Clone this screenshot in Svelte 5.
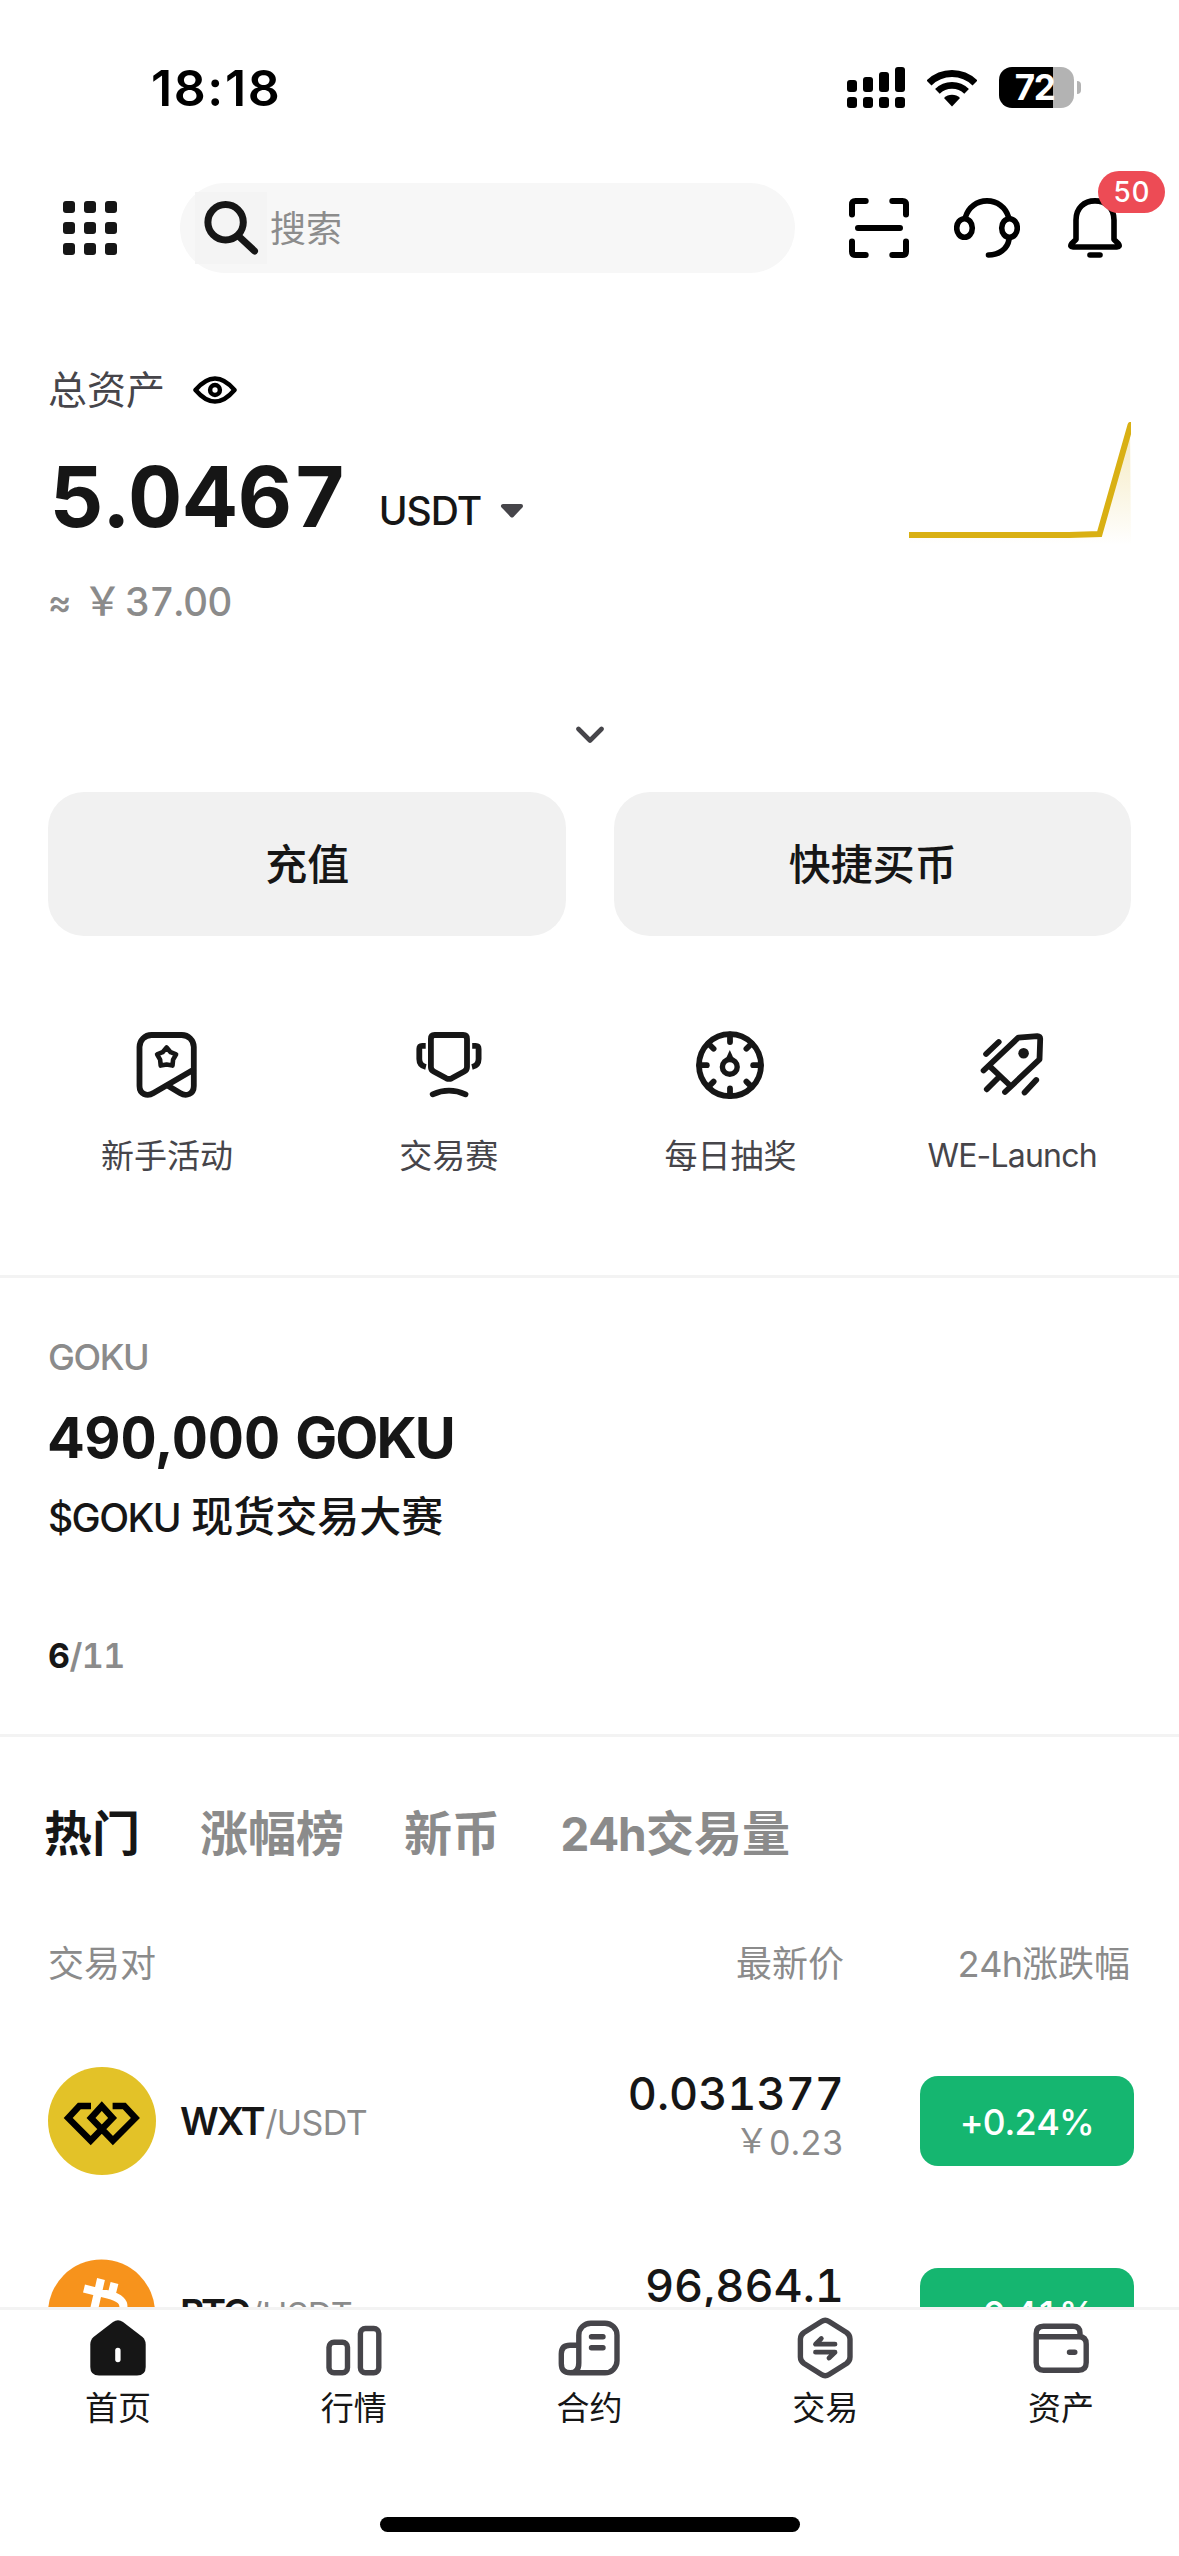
<script lang="ts">
  type Pair = { base: string; quote: string; price: string; fiat: string; change: string; logo: string };

  const signal = [12, 15, 20, 25];
  const ticks = [0, 45, 90, 135, 180, 225, 270, 315];

  const shortcuts = [
    { id: 'newbie', label: '新手活动' },
    { id: 'contest', label: '交易赛' },
    { id: 'lottery', label: '每日抽奖' },
    { id: 'launch', label: 'WE-Launch' }
  ];

  const tabs = [
    { latin: '', label: '热门' },
    { latin: '', label: '涨幅榜' },
    { latin: '', label: '新币' },
    { latin: '24h', label: '交易量' }
  ];

  const pairs: Pair[] = [
    { base: 'WXT', quote: 'USDT', price: '0.031377', fiat: '0.23', change: '+0.24%', logo: 'wxt' },
    { base: 'BTC', quote: 'USDT', price: '96,864.1', fiat: '710,014.00', change: '+0.41%', logo: 'btc' }
  ];

  const navItems = [
    { id: 'home', label: '首页' },
    { id: 'market', label: '行情' },
    { id: 'futures', label: '合约' },
    { id: 'trade', label: '交易' },
    { id: 'assets', label: '资产' }
  ];

  let activeTab = $state(0);
</script>

<div class="screen">
  <header class="status">
    <span class="time">18:18</span>
    <div class="indicators">
      <div class="signal">
        {#each signal as h}
          <div class="signal-col">
            <i style="height: {h}px"></i>
            <i class="dot"></i>
          </div>
        {/each}
      </div>
      <svg class="wifi" width="50" height="38" viewBox="0 0 50 38" fill="none" stroke="#000">
        <path d="M2 14A32.5 32.5 0 0 1 48 14" stroke-width="7" />
        <path d="M10.4 22.4A20.7 20.7 0 0 1 39.6 22.4" stroke-width="6.6" />
        <path d="M25 37.5L17 29A11.3 11.3 0 0 1 33 29Z" fill="#000" stroke="none" />
      </svg>
      <div class="battery"><span>72</span></div>
      <div class="battery-tip"></div>
    </div>
  </header>

  <div class="toolbar">
    <div class="apps">
      {#each Array(9) as _}
        <i></i>
      {/each}
    </div>
    <div class="search">
      <div class="search-icon">
        <svg width="72" height="72" viewBox="0 0 72 72" fill="none" stroke="#161616" stroke-width="7" stroke-linecap="round">
          <circle cx="30.6" cy="30.3" r="17.7" />
          <path d="M44 44.5L59.5 59" />
        </svg>
      </div>
      <span>搜索</span>
    </div>
    <div class="tools">
      <svg width="60" height="60" viewBox="0 0 60 60" fill="none" stroke="#000" stroke-width="6" stroke-linecap="round">
        <path d="M3 16.5V6.5Q3 3 6.5 3H16.7M43.3 3H53.5Q57 3 57 6.5V16.5M57 43.5V53.5Q57 57 53.5 57H43.3M16.7 57H6.5Q3 57 3 53.5V43.5M9 30H51" />
      </svg>
      <svg width="66" height="60" viewBox="0 0 66 60" fill="none" stroke="#000" stroke-width="5.6" stroke-linecap="round">
        <ellipse cx="10.5" cy="30" rx="7.8" ry="9.3" />
        <ellipse cx="55.5" cy="30" rx="7.8" ry="9.3" />
        <path d="M11.5 19C14.5 9 23 2.9 33 2.9S51.5 9 54.5 19M55 41.5C53.5 51 45 57 34.5 57" />
      </svg>
      <div class="bell">
        <svg width="54" height="60" viewBox="0 0 54 60" fill="none" stroke="#000" stroke-width="5.6" stroke-linecap="round" stroke-linejoin="round">
          <path d="M8 41.5L3.6 45.8Q1.5 49 5 49H49Q52.5 49 50.4 45.8L46 41.5V22C46 10 38 2.9 27 2.9S8 10 8 22Z" />
          <path d="M22 57H32" />
        </svg>
        <span class="badge">50</span>
      </div>
    </div>
  </div>

  <section class="balance">
    <div class="info">
      <div class="label">
        <span>总资产</span>
        <svg width="44" height="28" viewBox="0 0 44 28" fill="none" stroke="#000" stroke-width="4.5" stroke-linejoin="round">
          <path d="M2.5 14C8 7.5 14 2.5 22 2.5S36 7.5 41.5 14C36 20.5 30 25.5 22 25.5S8 20.5 2.5 14Z" />
          <circle cx="22" cy="14" r="4.9" />
        </svg>
      </div>
      <div class="total">
        <strong>5.0467</strong>
        <span class="unit">USDT</span>
        <svg width="24" height="16" viewBox="0 0 24 16" fill="#46454a" stroke="#46454a" stroke-width="4" stroke-linejoin="round">
          <path d="M3 3H21L12 12.5Z" />
        </svg>
      </div>
      <div class="approx"><i>≈</i><b>￥</b><span>37.00</span></div>
    </div>
    <svg class="spark" width="222" height="123" viewBox="0 0 222 123">
      <defs>
        <linearGradient id="fade" x1="0" y1="0" x2="0" y2="1">
          <stop offset="0" stop-color="#d9b013" stop-opacity="0.28" />
          <stop offset="1" stop-color="#d9b013" stop-opacity="0" />
        </linearGradient>
      </defs>
      <path d="M0 113L160 113L190 112L221 3L222 123H0Z" fill="url(#fade)" />
      <path d="M0 113H160L190.5 112L221.5 3" fill="none" stroke="#d9b013" stroke-width="6" stroke-linecap="round" />
    </svg>
  </section>

  <div class="expand">
    <svg width="28" height="18" viewBox="0 0 28 18" fill="none" stroke="#46454a" stroke-width="4.6" stroke-linecap="round" stroke-linejoin="round">
      <path d="M2.5 3L14 14.5L25.5 3" />
    </svg>
  </div>

  <div class="actions">
    <button>充值</button>
    <button>快捷买币</button>
  </div>

  <div class="shortcuts">
    {#each shortcuts as s}
      <div class="shortcut">
        <svg width="72" height="72" viewBox="0 0 72 72" fill="none" stroke="#161616" stroke-width="5.8" stroke-linecap="round" stroke-linejoin="round">
          {#if s.id === 'newbie'}
            <g transform="translate(0.5 0)">
              <path d="M62.3 41V18A12 12 0 0 0 50.3 6H20A12 12 0 0 0 8 18V57C8 65 15.5 68 22 64L62.3 40.5V57C62.3 65 55 68 48.5 64L36 56.5" />
              <path stroke-width="4.6" d="M35.1 18.5L39.1 23.2L44.6 25.4L41.6 30.6L41 36.6L35.1 35.6L29.2 36.6L28.6 30.6L25.6 25.4L31.1 23.2Z" />
            </g>
          {:else if s.id === 'contest'}
            <g transform="translate(1.7 0)">
              <path d="M20 6H48.5Q52.3 6 52.3 10V38Q52.3 41 49.5 42.5L37 49.3Q34.3 50.5 31.6 49.3L19 42.5Q16.2 41 16.2 38V10Q16.2 6 20 6Z" />
              <path stroke-linecap="butt" d="M11 16.9H7.5Q4.6 16.9 4.6 20V30Q4.6 36.5 11.2 38M57.5 16.9H61Q63.9 16.9 63.9 20V30Q63.9 36.5 57.3 38" />
              <path d="M18 65.3Q34.3 58 50.8 65.3" />
            </g>
          {:else if s.id === 'lottery'}
            <g transform="translate(0.6 0)">
              <circle cx="35.4" cy="36.2" r="31" />
              {#each ticks as deg}
                <path d="M35.4 5.5V13" transform="rotate({deg} 35.4 36.2)" />
              {/each}
              <circle cx="35.2" cy="37.9" r="7.4" stroke-width="5.4" />
              <path d="M35.2 21L39.5 30.5H30.9Z" fill="#161616" stroke="none" />
            </g>
          {:else}
            <g transform="translate(1.8 0)">
              <path d="M5.8 41.5L40.5 8.6L59.5 7.1Q62.5 7 62.4 10L61.7 30.3L27.2 63M12.3 37.7L32.8 57M21.5 47.7L9 60.3M20.9 13L8.3 25M58.4 51L46.8 63.5" />
              <circle cx="45.8" cy="24.3" r="5.3" fill="#161616" stroke="none" />
            </g>
          {/if}
        </svg>
        <span class={s.id}>{s.label}</span>
      </div>
    {/each}
  </div>

  <section class="promo">
    <p class="promo-tag">GOKU</p>
    <h2>490,000 <span>GOKU</span></h2>
    <p class="promo-desc"><span class="latin">$GOKU</span>{' '}现货交易大赛</p>
    <p class="promo-page"><b>6</b>/11</p>
  </section>

  <nav class="tabs">
    {#each tabs as tab, i}
      <button class:active={i === activeTab} onclick={() => (activeTab = i)}>
        {#if tab.latin}<span>{tab.latin}</span>{/if}{tab.label}
      </button>
    {/each}
  </nav>

  <div class="list">
    <div class="row head">
      <span>交易对</span>
      <span class="price">最新价</span>
      <span class="change"><i>24h</i>涨跌幅</span>
    </div>
    {#each pairs as p}
      <div class="row">
        <div class="pair">
          {#if p.logo === 'wxt'}
            <svg width="108" height="108" viewBox="0 0 108 108">
              <circle cx="54" cy="54" r="54" fill="#e3c228" />
              <path d="M43 39H31.3L20.2 51L42.7 73.5L64.6 51L53.8 39L43 51L64.9 73.5L87.4 51L76.3 39H64.6" fill="none" stroke="#000" stroke-width="6.5" />
            </svg>
          {:else}
            <svg width="108" height="108" viewBox="0 0 108 108">
              <circle cx="53.5" cy="54" r="53.5" fill="#f7931c" />
              <path d="M36 29.5L60 35.5Q78 40 75 50T54 56L42 53M54 56Q74 60 70 71T46 76L29 72M53 20L38 86M66.5 24L63.5 36M57 78L54 90" fill="none" stroke="#fff" stroke-width="8" />
            </svg>
          {/if}
          <span><b>{p.base}</b><small>/{p.quote}</small></span>
        </div>
        <div class="price">
          <strong>{p.price}</strong>
          <span class="fiat"><i>￥</i>{p.fiat}</span>
        </div>
        <div class="pill">{p.change}</div>
      </div>
    {/each}
  </div>

  <nav class="bottom">
    {#each navItems as item}
      <div class="nav-item">
        <svg width="66" height="66" viewBox="0 0 66 66" fill="none" stroke="#46454a" stroke-width="5.4" stroke-linecap="round" stroke-linejoin="round">
          {#if item.id === 'home'}
            <path fill="#161616" stroke="none" d="M28 7Q33 3.5 38 7L57.5 22Q60.7 25 60.7 29.5V52Q60.7 60.5 52 60.5H14Q5.3 60.5 5.3 52V29.5Q5.3 25 8.5 22Z" />
            <path d="M32.9 35.5V44.5" stroke="#fff" />
          {:else if item.id === 'market'}
            <rect x="8" y="27.3" width="18.5" height="30.5" rx="5" />
            <rect x="39.4" y="13.5" width="18.4" height="44.3" rx="5" />
          {:else if item.id === 'futures'}
            <path d="M14.5 57.8H49A12 12 0 0 0 61 45.8V20.2A12 12 0 0 0 49 8.2H34.8A12 12 0 0 0 22.8 20.2V48Q22.8 57.8 14.5 57.8Q5.3 57.8 5.3 48.5V39Q5.3 30.3 14 30.3H22.8M35.5 21.8H47M35.5 32.8H47" />
          {:else if item.id === 'trade'}
            <path d="M29.5 6.5Q33.2 4 37 6.5L54.5 17.5Q58 20 58 24V42Q58 46 54.5 48.5L37 59.5Q33.2 62 29.5 59.5L12 48.5Q8.4 46 8.4 42V24Q8.4 20 12 17.5Z" />
            <path stroke-width="4.8" d="M29.3 23.5L23.5 29.2H43M23.5 37.2H43L37 43" />
          {:else}
            <path d="M8.2 21.8H51Q58.2 21.8 58.2 29V47.5Q58.2 55.2 50.5 55.2H15.5Q8.2 55.2 8.2 47.5V18.5Q8.2 11.2 15.5 11.2H45Q52 11.2 52 18V21.8M41.5 37.2H46.8" />
          {/if}
        </svg>
        <span>{item.label}</span>
      </div>
    {/each}
  </nav>
  <div class="home-bar"></div>
</div>

<style>
  :global(body) {
    background: #fff;
  }

  .screen {
    width: 1179px;
    height: 2556px;
    display: flex;
    flex-direction: column;
    overflow: hidden;
    background: #fff;
    color: #161616;
    font-family: Inter, 'Noto Sans CJK SC', sans-serif;
    font-feature-settings: 'tnum';
  }

  .screen > * {
    flex-shrink: 0;
    box-sizing: border-box;
  }

  i {
    display: block;
    font-style: normal;
  }

  svg {
    display: block;
    flex-shrink: 0;
  }

  p, h2 {
    margin: 0;
  }

  button {
    border: 0;
    padding: 0;
    background: none;
    font: inherit;
    color: inherit;
  }

  /* status bar */
  .status {
    height: 183px;
    padding: 57px 98px 0 151px;
    display: flex;
    align-items: flex-start;
    justify-content: space-between;
    color: #000;
  }

  .time {
    font-size: 50px;
    font-weight: 600;
    line-height: 62px;
    letter-spacing: 1.6px;
    font-feature-settings: normal;
  }

  .indicators {
    display: flex;
    align-items: center;
    height: 61px;
  }

  .signal {
    display: flex;
    align-items: flex-end;
    gap: 6px;
  }

  .signal-col {
    display: grid;
    gap: 5px;
  }

  .signal-col i {
    width: 10px;
    border-radius: 3px;
    background: #000;
  }

  .signal-col .dot {
    height: 11px;
  }

  .wifi {
    margin: 0 22px 0 22.5px;
  }

  .battery {
    width: 75px;
    height: 41px;
    box-sizing: border-box;
    padding-right: 4px;
    border-radius: 13px;
    background: linear-gradient(90deg, #000 54px, #b3b3b3 54px);
    color: #fff;
    font-size: 35px;
    font-weight: 700;
    line-height: 41px;
    text-align: center;
    letter-spacing: -1.5px;
    font-feature-settings: normal;
  }

  .battery-tip {
    width: 4px;
    height: 13px;
    margin-left: 3px;
    border-radius: 0 4px 4px 0;
    background: #b3b3b3;
  }

  /* toolbar */
  .toolbar {
    height: 90px;
    padding: 0 57px 0 63px;
    display: flex;
    align-items: center;
  }

  .apps {
    display: grid;
    grid-template-columns: repeat(3, 12px);
    gap: 9px;
  }

  .apps i {
    height: 12px;
    border-radius: 3px;
    background: #161616;
  }

  .search {
    width: 615px;
    height: 90px;
    margin-left: 63px;
    box-sizing: border-box;
    padding-left: 15px;
    display: flex;
    align-items: center;
    gap: 3px;
    border-radius: 45px;
    background: #f7f7f7;
    color: #8c8c8c;
    font-size: 36px;
  }

  .search span {
    padding-bottom: 4px;
  }

  .search-icon {
    background: #f4f4f4;
  }

  .tools {
    margin-left: 54px;
    display: flex;
    gap: 45px;
  }

  .bell {
    position: relative;
    margin-left: 3px;
  }

  .badge {
    position: absolute;
    left: 30px;
    top: -27px;
    width: 67px;
    height: 42px;
    border-radius: 21px;
    background: #ed4b55;
    color: #fff;
    font-size: 28px;
    font-weight: 500;
    line-height: 43px;
    text-align: center;
  }

  /* balance */
  .balance {
    height: 264px;
    margin-top: 90px;
    padding: 0 48px;
    display: flex;
    justify-content: space-between;
  }

  .label {
    display: flex;
    align-items: center;
    gap: 28px;
    height: 54px;
    font-size: 39px;
    color: #46454a;
  }

  .label span {
    padding-bottom: 6px;
  }

  .total {
    display: flex;
    align-items: flex-end;
    height: 100px;
    margin-top: 30px;
  }

  .total strong {
    margin-left: 2px;
    font-size: 84px;
    line-height: 100px;
    letter-spacing: 0.6px;
  }

  .unit {
    margin-left: 31px;
    font-size: 39px;
    font-weight: 500;
    line-height: 72px;
    letter-spacing: -1px;
  }

  .total svg {
    margin: 0 0 28px 19px;
  }

  .approx {
    display: flex;
    align-items: center;
    height: 51px;
    margin-top: 29px;
    font-size: 39px;
    font-weight: 500;
    color: #8b8b8b;
  }

  .approx i {
    font-size: 36px;
    width: 35px;
  }

  .approx b {
    padding-bottom: 7px;
    font-weight: 500;
  }

  .approx span {
    margin-left: 3px;
    letter-spacing: -1px;
  }

  .spark {
    margin-top: 59px;
  }

  .expand {
    height: 165px;
    padding-top: 99px;
    display: flex;
    justify-content: center;
  }

  .actions {
    display: grid;
    grid-template-columns: 1fr 1fr;
    gap: 48px;
    padding: 0 48px;
  }

  .actions button {
    height: 144px;
    padding: 0 0 5px 1px;
    border-radius: 36px;
    background: #f1f1f1;
    font-size: 42px;
    font-weight: 500;
  }

  .shortcuts {
    height: 339px;
    padding: 93px 26px 0;
    display: grid;
    grid-template-columns: repeat(4, 1fr);
  }

  .shortcut {
    display: flex;
    flex-direction: column;
    align-items: center;
    gap: 31px;
    font-size: 33px;
    line-height: 48px;
    color: #46454a;
  }

  .shortcut .launch {
    font-size: 32px;
    letter-spacing: -0.8px;
    font-feature-settings: normal;
  }

  /* promo */
  .promo {
    height: 462px;
    padding: 52px 48px 0;
    border-top: 3px solid #f3f3f3;
    border-bottom: 3px solid #f3f3f3;
  }

  .promo-tag {
    font-size: 36px;
    font-weight: 500;
    line-height: 54px;
    letter-spacing: -1.4px;
    color: #8b8b8b;
  }

  .promo h2 {
    margin-top: 19px;
    font-size: 56px;
    line-height: 70px;
  }

  .promo h2 span {
    letter-spacing: -2px;
  }

  .promo-desc {
    margin-top: 13px;
    font-size: 42px;
    font-weight: 500;
    line-height: 62px;
  }

  .latin {
    font-size: 39px;
    letter-spacing: -1.6px;
  }

  .promo-page {
    margin-top: 84px;
    font-size: 34px;
    font-weight: 600;
    line-height: 46px;
    letter-spacing: -0.5px;
    color: #8b8b8b;
  }

  .promo-page b {
    color: #161616;
    font-weight: 700;
  }

  /* market */
  .tabs {
    height: 166px;
    padding: 61px 44px 0;
    display: flex;
    align-items: flex-start;
    gap: 60px;
    font-size: 48px;
    font-weight: 700;
    line-height: 71px;
    color: #8b8b8b;
  }

  .tabs span {
    font-size: 46px;
    letter-spacing: -0.7px;
  }

  .tabs .active {
    color: #161616;
  }

  .list {
    flex: 1 1 0;
    min-height: 0;
    overflow: hidden;
    padding: 0 45px 0 48px;
  }

  .row {
    height: 192px;
    display: grid;
    grid-template-columns: 1fr 300px 214px;
    align-items: center;
  }

  .row .price {
    padding: 0 76px 7px 0;
    text-align: right;
    white-space: nowrap;
    justify-self: end;
  }

  .row.head {
    height: 122px;
    font-size: 36px;
    line-height: 54px;
    color: #8b8b8b;
  }

  .row.head .price {
    padding-bottom: 0;
  }

  .head .change {
    padding-right: 4px;
    text-align: right;
    white-space: nowrap;
  }

  .head i {
    display: inline;
    letter-spacing: -1px;
  }

  .pair {
    display: flex;
    align-items: center;
    gap: 24px;
  }

  .pair b {
    font-size: 38px;
    font-weight: 600;
    letter-spacing: -2px;
  }

  .pair small {
    margin-left: 1.5px;
    font-size: 34px;
    letter-spacing: -0.6px;
    color: #8b8b8b;
  }

  .price strong {
    display: block;
    font-size: 45px;
    font-weight: 500;
    line-height: 50px;
  }

  .fiat {
    display: flex;
    justify-content: flex-end;
    font-size: 34px;
    line-height: 48px;
    color: #8b8b8b;
  }

  .fiat i {
    line-height: 44px;
  }

  .pill {
    height: 90px;
    border-radius: 18px;
    background: #15b670;
    color: #fff;
    font-size: 36px;
    font-weight: 500;
    line-height: 92px;
    letter-spacing: -0.8px;
    text-align: center;
  }

  /* bottom navigation */
  .bottom {
    height: 210px;
    padding-top: 5px;
    border-top: 3px solid #f3f3f3;
    display: grid;
    grid-template-columns: repeat(5, 1fr);
    background: #fff;
  }

  .nav-item {
    display: flex;
    flex-direction: column;
    align-items: center;
    gap: 3px;
    font-size: 33px;
    line-height: 48px;
  }

  .home-bar {
    width: 420px;
    height: 15px;
    margin: 0 auto 24px;
    border-radius: 8px;
    background: #000;
  }
</style>
